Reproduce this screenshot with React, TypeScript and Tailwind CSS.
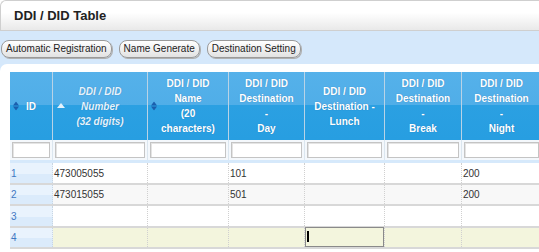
import React from "react";

const cols = [43, 95, 81, 76, 80, 77, 80];

function SortBoth() {
  return (
    <svg width="6" height="9" viewBox="0 0 6 9" className="absolute left-[3px] top-1/2 -translate-y-1/2">
      <path d="M0 4 L3 0 L6 4 Z" fill="#1b5fae" />
      <path d="M0 5 L3 9 L6 5 Z" fill="#1b5fae" />
    </svg>
  );
}

function SortUp() {
  return (
    <svg width="8" height="5" viewBox="0 0 8 5" className="absolute left-[4px] top-1/2 -translate-y-[3px]">
      <path d="M0 5 L4 0 L8 5 Z" fill="#e4f2fc" />
    </svg>
  );
}

const headers: { lines: string[]; sort?: "both" | "up"; italic?: boolean }[] = [
  { lines: ["ID"], sort: "both" },
  { lines: ["DDI / DID", "Number", "(32 digits)"], sort: "up", italic: true },
  { lines: ["DDI / DID", "Name", "(20", "characters)"], sort: "both" },
  { lines: ["DDI / DID", "Destination", "-", "Day"] },
  { lines: ["DDI / DID", "Destination -", "Lunch"] },
  { lines: ["DDI / DID", "Destination", "-", "Break"] },
  { lines: ["DDI / DID", "Destination", "-", "Night"] },
];

const rows = [
  ["1", "473005055", "", "101", "", "", "200"],
  ["2", "473015055", "", "501", "", "", "200"],
  ["3", "", "", "", "", "", ""],
  ["4", "", "", "", "", "", ""],
];

export default function App() {
  return (
    <div className="w-[539px] h-[252px] overflow-hidden bg-white font-['Liberation_Sans',Arial,sans-serif] text-[10px] text-[#333]">
      <div className="h-[31px] rounded-tl-[6px] border border-r-0 border-[#cfcfcf] bg-[linear-gradient(to_bottom,#ffffff_0%,#ffffff_40%,#e9e9e9_100%)] flex items-center pl-[13px]">
        <span className="font-bold text-[13px] text-[#222]">DDI / DID Table</span>
      </div>
      <div className="bg-[#d5e8fb] border-b border-[#bcd7f2]">
        <div className="h-[33px] flex items-center gap-[7px] pl-[1px] pt-[2px]">
          {["Automatic Registration", "Name Generate", "Destination Setting"].map((b) => (
            <button
              key={b}
              className="h-[18px] px-[4px] rounded-[8px] border border-[#9a9a9a] bg-[linear-gradient(to_bottom,#ffffff,#e2e2e2)] text-[10px] leading-[16px] text-[#222] shadow-[1px_1px_0_#b0b0b0]"
            >
              {b}
            </button>
          ))}
        </div>
        <div className="bg-white rounded-tl-[7px] pl-[10px] pt-[8px] h-[188px] overflow-hidden">
          <div className="flex flex-col w-max">
            <div className="flex h-[68px] bg-[linear-gradient(to_bottom,#55b1ea_0%,#50aee8_48%,#2ba0e2_48%,#279ee1_100%)]">
              {headers.map((h, i) => (
                <div
                  key={i}
                  style={{ width: cols[i] }}
                  className="relative h-full flex flex-col items-center justify-center border-r border-[#b9d3e6] [text-shadow:0_0_1px_rgba(0,60,120,0.4)]"
                >
                  {h.sort === "both" && <SortBoth />}
                  {h.sort === "up" && <SortUp />}
                  {h.lines.map((l, j) => (
                    <div
                      key={j}
                      className={`leading-[15px] font-bold text-[10px] ${h.italic ? "italic text-[#e6f3fc]" : "text-white"}`}
                    >
                      {l}
                    </div>
                  ))}
                </div>
              ))}
            </div>
            <div className="flex h-[23px] bg-[#f4f8fc] border-b-[3px] border-[#d6e9fb]">
              {cols.map((w, i) => (
                <div key={i} style={{ width: w }} className="h-full flex items-center px-[2px] border-r border-[#dbe6ef]">
                  <div className="w-full h-[16px] bg-white border border-[#c4c4c4] shadow-[inset_1px_1px_0_#e4e4e4]" />
                </div>
              ))}
            </div>
            {rows.map((r, ri) => (
              <div
                key={ri}
                className={`flex h-[21.5px] border-b-2 border-[#d8d8d8] ${
                  ri === 3 ? "bg-[#f3f5dd]" : ri === 1 ? "bg-[#f8f8f8]" : "bg-white"
                }`}
              >
                {r.map((c, ci) => (
                  <div
                    key={ci}
                    style={{ width: cols[ci] }}
                    className={`relative h-full flex items-center pt-[1px] ${
                      ci === 0
                        ? "pl-[1px] text-[#3f78c2] bg-[linear-gradient(to_bottom,#e9f3fd_0%,#e9f3fd_55%,#dbebfb_55%,#dbebfb_100%)] border-r border-dotted border-[#c9d6e3]"
                        : "pl-[1px] border-r border-dotted border-[#d0d0d0]"
                    }`}
                  >
                    {ri === 3 && ci === 4 ? (
                      <div className="absolute inset-x-0 top-[-1px] bottom-0 border border-[#8a8a8a] bg-[#f3f5dd] flex items-center pl-[1px]">
                        <div className="w-[1.5px] h-[11px] bg-black" />
                      </div>
                    ) : (
                      c
                    )}
                  </div>
                ))}
              </div>
            ))}
          </div>
        </div>
      </div>
    </div>
  );
}
